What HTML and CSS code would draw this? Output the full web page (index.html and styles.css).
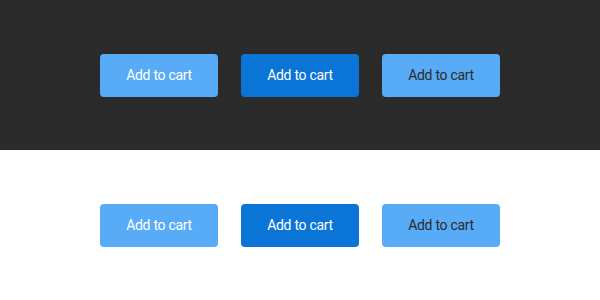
FILE: index.html
```html
<!DOCTYPE html>
<html lang="en">
<head>
  <meta charset="UTF-8" />
  <title>Buttons</title>
  <link rel="stylesheet" href="styles.css">
</head>
<body>
  <div class="panel dark">
    <button class="btn light-blue">Add to cart</button>
    <button class="btn blue">Add to cart</button>
    <button class="btn light-blue dark-text">Add to cart</button>
  </div>
  <div class="panel white">
    <button class="btn light-blue">Add to cart</button>
    <button class="btn blue">Add to cart</button>
    <button class="btn light-blue dark-text">Add to cart</button>
  </div>
</body>
</html>
```

FILE: styles.css
```css
body {
  margin: 0;
  font-family: Roboto, "Liberation Sans", sans-serif;
}
.panel {
  height: 150px;
  display: flex;
  justify-content: center;
  align-items: center;
  gap: 23px;
}
.dark {
  background-color: #2b2b2b;
}
.white {
  background-color: #ffffff;
}
.btn {
  width: 118px;
  height: 43px;
  border: none;
  border-radius: 4px;
  font-family: Roboto, "Liberation Sans", sans-serif;
  font-size: 14px;
  font-weight: 400;
  letter-spacing: -0.3px;
  color: #ffffff;
  cursor: pointer;
}
.light-blue {
  background-color: #58abf6;
}
.blue {
  background-color: #0a75d6;
}
.dark-text {
  color: #2b2b2b;
}
```
